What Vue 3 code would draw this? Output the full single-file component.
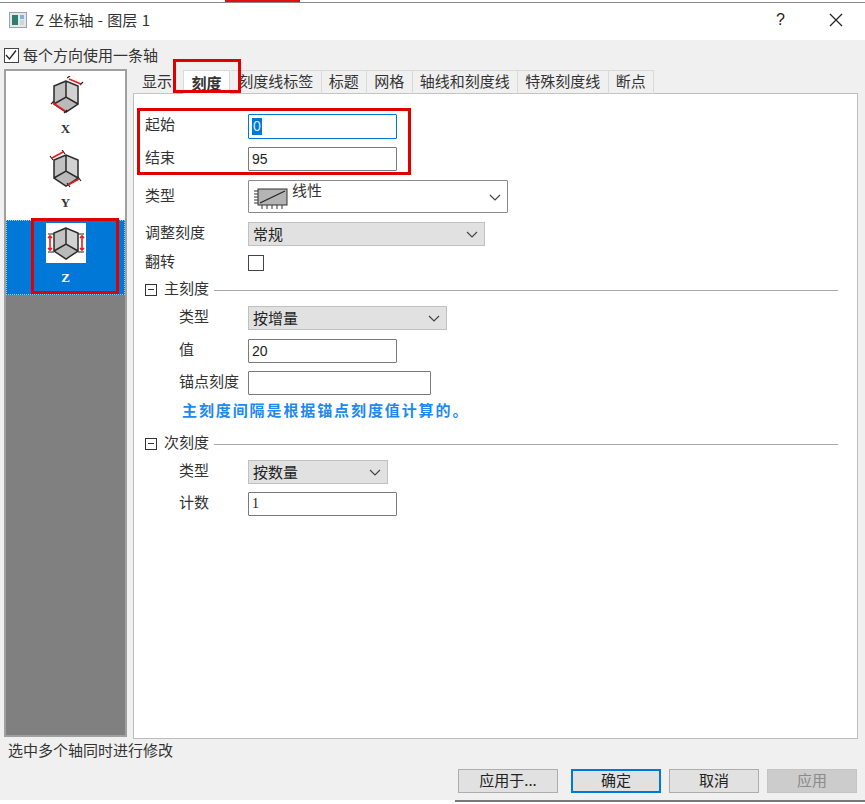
<template>
  <div class="screen">
    <div class="strip">
      <span class="strip-dark"></span>
      <span class="strip-red"></span>
    </div>

    <div class="titlebar">
      <svg class="app-icon" width="18" height="18" viewBox="0 0 18 18">
        <rect x="0.5" y="1.5" width="17" height="15" fill="#e4e8ea" stroke="#9aa4a8" />
        <rect x="3" y="4" width="6" height="10" fill="#2f7d6b" />
        <rect x="11" y="4" width="4" height="4" fill="#7fb2d8" />
        <rect x="11" y="9" width="4" height="5" fill="#cfd6da" />
      </svg>
      <span class="title">Z 坐标轴 - 图层 1</span>
      <span class="help">?</span>
      <svg class="close" width="14" height="14" viewBox="0 0 14 14">
        <path d="M1 1L13 13M13 1L1 13" stroke="#222" stroke-width="1.2" fill="none" />
      </svg>
    </div>

    <div class="body">
      <label class="per-axis">
        <span class="check checked">
          <svg width="14" height="14" viewBox="0 0 14 14">
            <path d="M2 7L5.5 11L12 2.5" stroke="#222" stroke-width="1.3" fill="none" />
          </svg>
        </span>
        <span class="per-axis-text">每个方向使用一条轴</span>
      </label>

      <div class="main">
        <div class="axis-list">
          <div v-for="axis in axes" :key="axis.name" class="axis" :class="{ selected: axis.name === 'Z' }">
            <div class="axis-icon">
              <svg width="40" height="40" viewBox="0 0 40 40">
                <path d="M20 5L8 10V28L20 36L32 28V10Z" fill="#d2d2d2" />
                <path d="M20 5L8 10V28L20 21Z" fill="#c2c2c2" />
                <path d="M20 21L8 28L20 36L32 28Z" fill="#bababa" />
                <path d="M20 5L8 10V28L20 36L32 28V10ZM20 5V21M8 28L20 21L32 28" fill="none" stroke="#2a2a2a" stroke-width="1.5" />
                <path :d="axis.ticks" fill="none" stroke="#222" stroke-width="1.2" />
                <path :d="axis.arrows" fill="none" stroke="#f01818" stroke-width="1.6" />
              </svg>
            </div>
            <span class="axis-name">{{ axis.name }}</span>
          </div>
          <div class="axis-rest"></div>
        </div>

        <div class="tabs-wrap">
          <div class="tabs">
            <span v-for="tab in tabs" :key="tab" class="tab" :class="{ active: tab === '刻度' }">{{ tab }}</span>
          </div>

          <div class="panel">
            <div class="row first">
              <span class="label">起始</span>
              <div class="input focused w150"><span class="sel">0</span></div>
            </div>
            <div class="row">
              <span class="label">结束</span>
              <div class="input w150">95</div>
            </div>
            <div class="row tall">
              <span class="label">类型</span>
              <div class="combo">
                <svg width="38" height="28" viewBox="0 0 38 28">
                  <rect x="5" y="6" width="29" height="16" fill="#b4b4b4" stroke="#333" />
                  <path d="M7 20L32 8" stroke="#222" stroke-width="1.2" />
                  <path d="M1 8H5M1 11H5M1 14H5M1 17H5M1 20H5M9 22V26M14 22V26M19 22V26M24 22V26M29 22V26" stroke="#333" />
                </svg>
                <span class="combo-text">线性</span>
                <svg class="chev" width="12" height="7" viewBox="0 0 12 7"><path d="M1 1L6 6L11 1" fill="none" stroke="#444" stroke-width="1.2" /></svg>
              </div>
            </div>
            <div class="row">
              <span class="label">调整刻度</span>
              <div class="select w237">常规<svg class="chev" width="12" height="7" viewBox="0 0 12 7"><path d="M1 1L6 6L11 1" fill="none" stroke="#444" stroke-width="1.2" /></svg></div>
            </div>
            <div class="row short">
              <span class="label">翻转</span>
              <span class="check big"></span>
            </div>

            <div class="group-head major">
              <span class="minus"></span>
              <span class="group-name">主刻度</span>
              <span class="group-line"></span>
            </div>
            <div class="row sub tight">
              <span class="label">类型</span>
              <div class="select w199">按增量<svg class="chev" width="12" height="7" viewBox="0 0 12 7"><path d="M1 1L6 6L11 1" fill="none" stroke="#444" stroke-width="1.2" /></svg></div>
            </div>
            <div class="row sub">
              <span class="label">值</span>
              <div class="input w150">20</div>
            </div>
            <div class="row sub tight">
              <span class="label">锚点刻度</span>
              <div class="input w183"></div>
            </div>
            <div class="note">主刻度间隔是根据锚点刻度值计算的。</div>

            <div class="group-head minor">
              <span class="minus"></span>
              <span class="group-name">次刻度</span>
              <span class="group-line"></span>
            </div>
            <div class="row sub tight">
              <span class="label">类型</span>
              <div class="select w140">按数量<svg class="chev" width="12" height="7" viewBox="0 0 12 7"><path d="M1 1L6 6L11 1" fill="none" stroke="#444" stroke-width="1.2" /></svg></div>
            </div>
            <div class="row sub tight">
              <span class="label">计数</span>
              <div class="input w150 serif">1</div>
            </div>
          </div>
        </div>

        <div class="mark mark-tab"></div>
        <div class="mark mark-range"></div>
        <div class="mark mark-axis"></div>
      </div>

      <div class="status">选中多个轴同时进行修改</div>

      <div class="buttons">
        <button class="btn apply-to">应用于...</button>
        <button class="btn ok">确定</button>
        <button class="btn">取消</button>
        <button class="btn disabled">应用</button>
      </div>
    </div>
    <div class="bottom"><span class="bottom-shadow"></span></div>
  </div>
</template>

<script setup>
const axes = [
  { name: 'X', arrows: 'M23 3L35 8M7 27L19 35', ticks: 'M21 2L24 0M34 9L37 6M5 28L8 25M18 37L21 34' },
  { name: 'Y', arrows: 'M6 8L17 2M22 35L33 29', ticks: 'M4 6L7 10M16 0L19 4M21 33L24 37M32 27L35 31' },
  { name: 'Z', arrows: 'M4 13V27M2 15L4 13L6 15M2 25L4 27L6 25M36 13V27M34 15L36 13L38 15M34 25L36 27L38 25', ticks: 'M2 11H8M2 29H8M32 11H38M32 29H38' },
]

const tabs = ['显示', '刻度', '刻度线标签', '标题', '网格', '轴线和刻度线', '特殊刻度线', '断点']
</script>

<style>
html, body {
  margin: 0;
  background: #fff;
}
</style>

<style scoped>
.screen {
  width: 865px;
  height: 804px;
  overflow: hidden;
  display: flex;
  flex-direction: column;
  font-family: "Noto Sans CJK SC", "Noto Sans", sans-serif;
  font-size: 15px;
  color: #222;
  background: #fff;
}

.strip {
  height: 3px;
  display: flex;
  border-bottom: 1px solid #8a8a8a;
  box-sizing: border-box;
}

.strip-dark {
  width: 225px;
}

.strip-red {
  width: 75px;
  background: #e01010;
}

.titlebar {
  height: 37px;
  box-sizing: border-box;
  display: flex;
  align-items: center;
  padding: 0 22px 4px 9px;
  background: #fff;
}

.title {
  margin-left: 8px;
  font-size: 15px;
  word-spacing: 1px;
  color: #333;
  flex: 1;
}

.help {
  font-family: "Liberation Sans", sans-serif;
  font-size: 16px;
  margin-right: 44px;
}

.body {
  flex: 1;
  background: #f0f0f0;
  display: flex;
  flex-direction: column;
  min-height: 0;
}

.per-axis {
  height: 22px;
  margin-top: 4px;
  padding-left: 4px;
  display: flex;
  align-items: center;
  gap: 4px;
  color: #333;
}

.per-axis-text {
  line-height: 20px;
}

.check {
  width: 15px;
  height: 15px;
  box-sizing: border-box;
  border: 1px solid #444;
  background: #fff;
  display: inline-block;
}

.check.checked svg {
  display: block;
  margin: -1px;
}

.check.big {
  width: 16px;
  height: 16px;
}

.main {
  position: relative;
  display: flex;
  height: 670px;
  margin-top: 3px;
}

.axis-list {
  width: 123px;
  height: 668px;
  margin-left: 4px;
  box-sizing: border-box;
  border: 2px solid #a0a0a0;
  background: #fff;
  display: flex;
  flex-direction: column;
}

.axis {
  height: 75px;
  padding-top: 5px;
  box-sizing: border-box;
  display: flex;
  flex-direction: column;
  align-items: center;
  flex-shrink: 0;
}

.axis:first-child {
  height: 74px;
}

.axis.selected {
  padding-top: 3px;
  background: #0078d7;
  outline: 1px dotted #9cc8ee;
  outline-offset: -1px;
}

.axis-icon {
  width: 40px;
  height: 40px;
  background: #fff;
}

.axis-icon svg {
  display: block;
}

.axis-name {
  margin-top: 5px;
  font-family: "Liberation Serif", serif;
  font-size: 13px;
  font-weight: 700;
  line-height: 16px;
  color: #333;
}

.axis.selected .axis-name {
  color: #fff;
  margin-top: 7px;
}

.axis-rest {
  flex: 1;
  background: #808080;
}

.tabs-wrap {
  margin-left: 6px;
  width: 725px;
  display: flex;
  flex-direction: column;
}

.tabs {
  height: 25px;
  display: flex;
  padding: 1px 0 0 1px;
  box-sizing: border-box;
  position: relative;
  z-index: 1;
  margin-bottom: -1px;
}

.tab {
  padding: 0 7.25px;
  height: 24px;
  line-height: 20px;
  box-sizing: border-box;
  border-top: 1px solid #d9d9d9;
  border-right: 1px solid #d9d9d9;
  border-bottom: 1px solid #c4c4c4;
  background: #f0f0f0;
  color: #333;
  white-space: nowrap;
}

.tab:first-child {
  padding-left: 8px;
  border-top-color: #f0f0f0;
  border-right: 0;
}

.tab.active {
  background: #fff;
  border-left: 1px solid #d9d9d9;
  border-bottom-color: #fff;
  font-weight: 700;
  margin: 0 1.25px 0 4px;
  line-height: 23px;
}

.panel {
  position: relative;
  height: 646px;
  box-sizing: border-box;
  border: 1px solid #bcbcbc;
  background: #fff;
  padding: 11px 0 0 11px;
  display: flex;
  flex-direction: column;
}

.row {
  display: flex;
  align-items: center;
  height: 24px;
  margin-top: 9px;
  color: #333;
}

.row.tall {
  height: 33px;
}

.row.short {
  height: 16px;
}

.row.sub {
  padding-left: 34px;
}

.row.tight {
  margin-top: 8px;
}

.label {
  width: 103px;
  flex-shrink: 0;
  height: 20px;
  line-height: 16px;
}

.row.sub .label {
  width: 69px;
}

.input {
  height: 24px;
  box-sizing: border-box;
  border: 1px solid #7a7a7a;
  border-radius: 1px;
  background: #fff;
  padding-left: 3px;
  font-family: "Liberation Sans", sans-serif;
  font-size: 14px;
  line-height: 22px;
  color: #222;
}

.input.focused {
  height: 25px;
  border: 1px solid #0078d7;
}

.sel {
  display: inline-block;
  background: #0078d7;
  color: #d8ecff;
  line-height: 17px;
  padding: 0 1px;
  margin-top: 2px;
}

.input.serif {
  font-family: "Liberation Serif", serif;
}

.w150 {
  width: 149px;
}

.w183 {
  width: 183px;
}

.w237 {
  width: 237px;
}

.w199 {
  width: 199px;
}

.w140 {
  width: 140px;
}

.combo {
  width: 260px;
  height: 33px;
  box-sizing: border-box;
  border: 1px solid #8a8a8a;
  border-radius: 1px;
  display: flex;
  align-items: center;
  padding-left: 4px;
  position: relative;
}

.combo-text {
  align-self: flex-start;
  margin-left: 1px;
  line-height: 18px;
}

.chev {
  position: absolute;
  right: 6px;
  top: 50%;
  margin-top: -3px;
}

.select {
  height: 24px;
  box-sizing: border-box;
  border: 1px solid #c0c0c0;
  background: #e1e1e1;
  padding-left: 4px;
  line-height: 22px;
  position: relative;
  color: #222;
}

.group-head {
  display: flex;
  align-items: center;
  height: 16px;
}

.group-head.major {
  margin-top: 11px;
}

.group-head.minor {
  margin-top: 15px;
}

.minus {
  width: 12px;
  height: 12px;
  box-sizing: border-box;
  border: 1px solid #333;
  position: relative;
  flex-shrink: 0;
}

.minus::after {
  content: "";
  position: absolute;
  left: 2px;
  right: 2px;
  top: 4px;
  height: 1px;
  background: #333;
}

.group-name {
  margin-left: 7px;
  height: 20px;
  line-height: 16px;
  color: #333;
}

.group-line {
  margin-left: 5px;
  width: 624px;
  height: 1px;
  background: #a8a8a8;
}

.note {
  height: 20px;
  margin-top: 6px;
  padding-left: 37px;
  line-height: 18px;
  font-size: 15px;
  font-weight: 700;
  letter-spacing: 1.9px;
  color: #1e88f0;
}

.status {
  height: 20px;
  margin-top: 1px;
  padding-left: 8px;
  font-size: 15px;
  line-height: 20px;
  color: #333;
}

.buttons {
  display: flex;
  margin-top: 9px;
  padding-left: 458px;
  gap: 8px;
}

.btn {
  width: 90px;
  height: 24px;
  padding: 0 0 2px;
  box-sizing: border-box;
  border: 1px solid #adadad;
  background: #e1e1e1;
  font-family: inherit;
  font-size: 15px;
  line-height: 20px;
  color: #222;
}

.btn.apply-to {
  width: 100px;
  margin-right: 5px;
}

.btn.ok {
  border: 2px solid #0078d7;
  line-height: 18px;
}

.btn.disabled {
  background: #ccc;
  border-color: #c4c4c4;
  color: #8a8a8a;
}

.bottom {
  height: 4px;
  flex-shrink: 0;
  display: flex;
  justify-content: flex-end;
  background: #fff;
}

.bottom-shadow {
  width: 410px;
  height: 2px;
  background: #777;
}

.mark {
  position: absolute;
  z-index: 2;
  box-sizing: border-box;
  border: 3px solid #e00000;
  pointer-events: none;
}

.mark-tab {
  left: 173px;
  top: -10px;
  width: 68px;
  height: 34px;
}

.mark-range {
  left: 137px;
  top: 39px;
  width: 274px;
  height: 67px;
}

.mark-axis {
  left: 31px;
  top: 149px;
  width: 88px;
  height: 76px;
}
</style>
